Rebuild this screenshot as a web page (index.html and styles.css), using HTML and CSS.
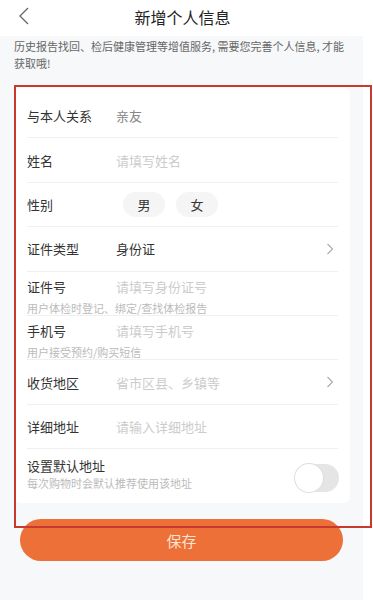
FILE: index.html
```html
<!DOCTYPE html>
<html lang="zh-CN">
<head>
    <meta charset="UTF-8">
    <meta name="viewport" content="width=device-width, initial-scale=1.0">
    <title>新增个人信息</title>
    <link rel="stylesheet" href="styles.css">
</head>
<body>

    <div class="header">
        <span class="back">
            <svg width="12" height="20" viewBox="0 0 12 20"><path d="M10 2 L2 10 L10 18" fill="none" stroke="#666" stroke-width="1.3"/></svg>
        </span>
        <h1 class="title">新增个人信息</h1>
    </div>

    <div class="page">
        <p class="intro">历史报告找回、检后健康管理等增值服务, 需要您完善个人信息, 才能获取哦!</p>

        <div class="card">
            <div class="row">
                <span class="label">与本人关系</span>
                <span class="value muted">亲友</span>
            </div>
            <div class="row">
                <span class="label">姓名</span>
                <span class="value placeholder">请填写姓名</span>
            </div>
            <div class="row">
                <span class="label">性别</span>
                <div class="chips">
                    <span class="chip">男</span>
                    <span class="chip">女</span>
                </div>
            </div>
            <div class="row">
                <span class="label">证件类型</span>
                <span class="value">身份证</span>
                <span class="arrow">
                    <svg width="8" height="12" viewBox="0 0 8 12"><path d="M1.5 1 L6.5 6 L1.5 11" fill="none" stroke="#aaa" stroke-width="1.1"/></svg>
                </span>
            </div>
            <div class="row tall">
                <div class="line">
                    <span class="label">证件号</span>
                    <span class="value placeholder">请填写身份证号</span>
                </div>
                <p class="hint">用户体检时登记、绑定/查找体检报告</p>
            </div>
            <div class="row tall">
                <div class="line">
                    <span class="label">手机号</span>
                    <span class="value placeholder">请填写手机号</span>
                </div>
                <p class="hint">用户接受预约/购买短信</p>
            </div>
            <div class="row">
                <span class="label">收货地区</span>
                <span class="value placeholder">省市区县、乡镇等</span>
                <span class="arrow">
                    <svg width="8" height="12" viewBox="0 0 8 12"><path d="M1.5 1 L6.5 6 L1.5 11" fill="none" stroke="#aaa" stroke-width="1.1"/></svg>
                </span>
            </div>
            <div class="row">
                <span class="label">详细地址</span>
                <span class="value placeholder">请输入详细地址</span>
            </div>
            <div class="row last">
                <div class="default-text">
                    <span class="label">设置默认地址</span>
                    <p class="hint">每次购物时会默认推荐使用该地址</p>
                </div>
                <span class="switch"><span class="knob"></span></span>
            </div>
        </div>

        <button class="save">保存</button>
    </div>

    <!-- annotation frame from the screenshot -->
    <div class="mark"></div>

</body>
</html>
```

FILE: styles.css
```css
body {
    margin: 0;
    padding: 0;
    background-color: #fff;
    font-family: "Noto Sans CJK SC", "Noto Sans", sans-serif;
    color: #333;
    width: 373px;
    position: relative;
}

/* Header */
.header {
    height: 36px;
    background-color: #fff;
    display: flex;
    align-items: center;
    justify-content: center;
    position: relative;
}
.back {
    position: absolute;
    left: 18px;
    top: 6px;
}
.title {
    margin: -2px 0 0 -8px;
    font-size: 16px;
    font-weight: 400;
    color: #222;
}

/* Page */
.page {
    width: 363px;
    background-color: #f7f8fa;
    padding: 2px 0 40px;
    min-height: 564px;
    box-sizing: border-box;
}
.intro {
    margin: 0 8px 0 14px;
    font-size: 11px;
    line-height: 17px;
    color: #666;
}

.card {
    margin: 16px 13px 0 14px;
    background-color: #fff;
    border-radius: 6px;
    padding: 6px 12px 0 13px;
}
.row {
    height: 44.4px;
    display: flex;
    align-items: center;
    border-bottom: 1px solid #f0f0f0;
    box-sizing: border-box;
}
.row.tall {
    flex-direction: column;
    align-items: stretch;
    justify-content: flex-start;
}
.row.last {
    height: 54px;
    border-bottom: none;
    justify-content: space-between;
}
.line {
    display: flex;
    align-items: center;
    height: 30px;
}
.label {
    width: 89px;
    font-size: 13px;
    color: #333;
    flex-shrink: 0;
}
.value {
    font-size: 13px;
    color: #333;
    flex: 1;
}
.value.muted {
    color: #888;
}
.value.placeholder {
    color: #ccc;
}
.arrow {
    width: 12px;
    display: flex;
    justify-content: flex-start;
}
.hint {
    margin: 0;
    font-size: 11px;
    line-height: 14px;
    color: #bbb;
}

.chips {
    display: flex;
    gap: 11px;
    margin-left: 7px;
}
.chip {
    width: 42px;
    height: 25px;
    border-radius: 13px;
    background-color: #f5f5f5;
    font-size: 13px;
    display: flex;
    align-items: center;
    justify-content: center;
    color: #333;
}

.default-text {
    display: flex;
    flex-direction: column;
    gap: 1px;
    margin-top: -6px;
}
.default-text .label {
    width: auto;
}

.switch {
    width: 44px;
    height: 28px;
    border-radius: 14px;
    background-color: #e5e5e5;
    position: relative;
    margin-top: 4px;
    margin-right: -1px;
}
.knob {
    position: absolute;
    left: 0;
    top: 0;
    width: 28px;
    height: 28px;
    border-radius: 50%;
    background-color: #fff;
    box-shadow: 0 0 0 1px #ddd;
}

.save {
    display: block;
    margin: 16px auto 0 20px;
    width: 323px;
    height: 42px;
    border: none;
    border-radius: 21px;
    background-color: #ec7037;
    color: #fde3d2;
    font-family: inherit;
    font-size: 15px;
}

.mark {
    position: absolute;
    left: 14px;
    top: 85px;
    width: 354px;
    height: 439px;
    border: 2px solid #c83a30;
    pointer-events: none;
}
```
